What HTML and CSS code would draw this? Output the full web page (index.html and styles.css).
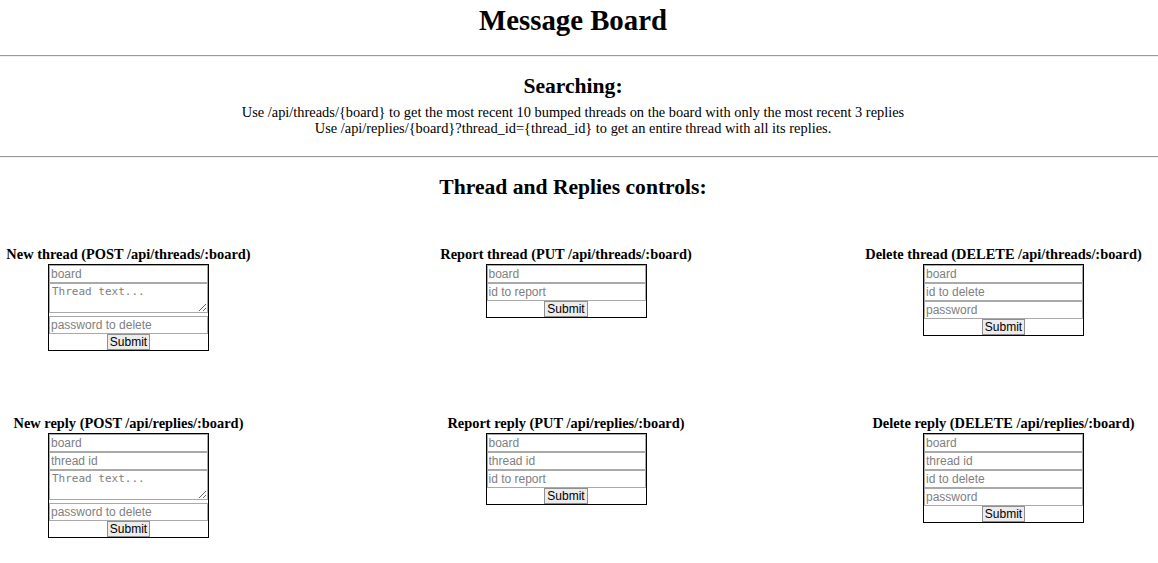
FILE: index.html
```html
<!DOCTYPE html>
<html lang="en">
<head>
<meta charset="utf-8">
<title>Message Board</title>
<link rel="stylesheet" href="styles.css">
</head>
<body>
<header class="page-header">
  <h1 class="title">Message Board</h1>
</header>
<hr class="rule rule-top">
<section class="searching">
  <h2 class="section-title">Searching:</h2>
  <p class="usage">Use /api/threads/{board} to get the most recent 10 bumped threads on the board with only the most recent 3 replies<br>Use /api/replies/{board}?thread_id={thread_id} to get an entire thread with all its replies.</p>
</section>
<hr class="rule rule-mid">
<section class="controls">
  <h2 class="section-title controls-title">Thread and Replies controls:</h2>
  <div class="grid">
    <div class="cell">
      <h4 class="form-title">New thread (POST /api/threads/:board)</h4>
      <form class="box">
        <input class="field" type="text" placeholder="board">
        <textarea class="area" placeholder="Thread text..."></textarea>
        <input class="field" type="text" placeholder="password to delete">
        <button class="submit" type="button">Submit</button>
      </form>
    </div>
    <div class="cell">
      <h4 class="form-title">Report thread (PUT /api/threads/:board)</h4>
      <form class="box">
        <input class="field" type="text" placeholder="board">
        <input class="field" type="text" placeholder="id to report">
        <button class="submit" type="button">Submit</button>
      </form>
    </div>
    <div class="cell">
      <h4 class="form-title">Delete thread (DELETE /api/threads/:board)</h4>
      <form class="box">
        <input class="field" type="text" placeholder="board">
        <input class="field" type="text" placeholder="id to delete">
        <input class="field" type="text" placeholder="password">
        <button class="submit" type="button">Submit</button>
      </form>
    </div>
    <div class="cell">
      <h4 class="form-title">New reply (POST /api/replies/:board)</h4>
      <form class="box">
        <input class="field" type="text" placeholder="board">
        <input class="field" type="text" placeholder="thread id">
        <textarea class="area" placeholder="Thread text..."></textarea>
        <input class="field" type="text" placeholder="password to delete">
        <button class="submit" type="button">Submit</button>
      </form>
    </div>
    <div class="cell">
      <h4 class="form-title">Report reply (PUT /api/replies/:board)</h4>
      <form class="box">
        <input class="field" type="text" placeholder="board">
        <input class="field" type="text" placeholder="thread id">
        <input class="field" type="text" placeholder="id to report">
        <button class="submit" type="button">Submit</button>
      </form>
    </div>
    <div class="cell">
      <h4 class="form-title">Delete reply (DELETE /api/replies/:board)</h4>
      <form class="box">
        <input class="field" type="text" placeholder="board">
        <input class="field" type="text" placeholder="thread id">
        <input class="field" type="text" placeholder="id to delete">
        <input class="field" type="text" placeholder="password">
        <button class="submit" type="button">Submit</button>
      </form>
    </div>
  </div>
</section>
</body>
</html>
```
FILE: styles.css
```css
body {
  margin: 0;
  font-family: "Liberation Serif", "Times New Roman", serif;
  font-size: 14.4px;
  color: #000;
  background: #fff;
}

.page-header {
  padding: 4px 12px 0 0;
  text-align: center;
}

.title {
  margin: 0;
  font-size: 28.8px;
  line-height: 33px;
  font-weight: bold;
}

.rule {
  margin: 0;
  border: 0;
  height: 0;
  border-top: 1px solid #9a9a9a;
  border-bottom: 1px solid #eeeeee;
}

.rule-top {
  margin-top: 18px;
}

.rule-mid {
  margin-top: 20px;
}

.searching {
  padding-right: 12px;
  text-align: center;
}

.section-title {
  margin: 17px 0 0;
  font-size: 21.6px;
  line-height: 25px;
  font-weight: bold;
  text-align: center;
}

.controls-title {
  padding-right: 12px;
}

.usage {
  margin: 5px 0 0;
  line-height: 16px;
}

.grid {
  margin-top: 46px;
  display: grid;
  grid-template-columns: repeat(3, 257px);
  column-gap: 180.5px;
  row-gap: 64px;
  align-items: start;
}

.cell {
  display: flex;
  flex-direction: column;
  align-items: center;
}

.form-title {
  margin: 0;
  font-size: 14.4px;
  line-height: 16px;
  white-space: nowrap;
}

.box {
  margin: 2px 0 0;
  width: 161px;
  box-sizing: border-box;
  border: 1px solid #000;
  display: flex;
  flex-direction: column;
}

.field {
  display: block;
  width: 100%;
  box-sizing: border-box;
  height: 18px;
  margin: 0;
  padding: 0 1px;
  border: 1px solid #a9a9a9;
  font-family: "Liberation Sans", Arial, sans-serif;
  font-size: 12px;
  color: #000;
  background: #fff;
}

.area {
  display: block;
  width: 100%;
  box-sizing: border-box;
  height: 30px;
  margin: 0 0 3px;
  padding: 1px 2px;
  border: 1px solid #a9a9a9;
  font-family: "DejaVu Sans Mono", "Liberation Mono", monospace;
  font-size: 11px;
  line-height: 13px;
  resize: vertical;
  background: #fff;
}

.field::placeholder,
.area::placeholder {
  color: #808080;
  opacity: 1;
}

.submit {
  align-self: center;
  height: 16px;
  margin: 0;
  padding: 0 2px;
  border: 1px solid #8f8f8f;
  border-radius: 0;
  background: #ececec;
  font-family: "Liberation Sans", Arial, sans-serif;
  font-size: 12px;
  line-height: 14px;
  color: #000;
}
```
